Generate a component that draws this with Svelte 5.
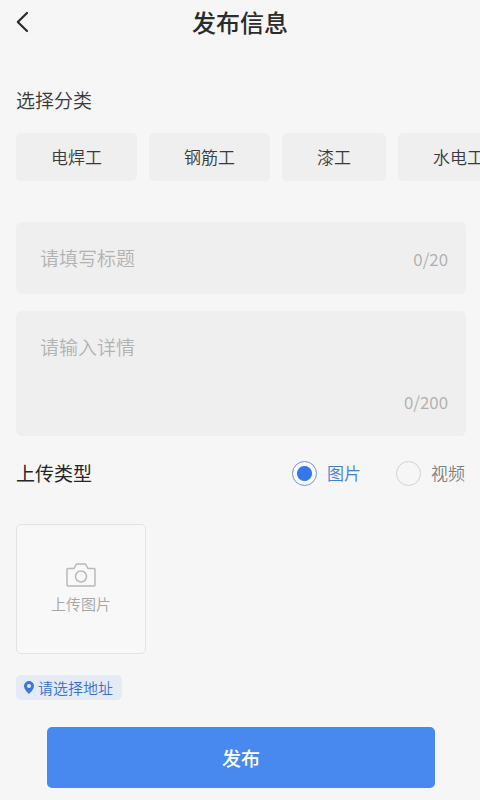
<script>
  const categories = ['电焊工', '钢筋工', '漆工', '水电工'];
  let category = $state('');
  let title = $state('');
  let detail = $state('');
  let kind = $state('image');
</script>

<div class="page">
  <header>
    <button class="back" type="button" aria-label="返回">
      <svg width="14" height="22" viewBox="0 0 14 22" fill="none" stroke="#2b2b2b" stroke-width="2.200" stroke-linecap="round" stroke-linejoin="round">
        <path d="M11 2 1.800 11l9.200 9" />
      </svg>
    </button>
    <h1>发布信息</h1>
  </header>

  <form onsubmit={(e) => e.preventDefault()}>
    <h2>选择分类</h2>
    <div class="chips">
      {#each categories as name}
        <button type="button" class="chip" aria-pressed={category === name} onclick={() => (category = name)}>{name}</button>
      {/each}
    </div>

    <div class="field single">
      <input type="text" maxlength="20" placeholder="请填写标题" aria-label="标题" bind:value={title} />
      <span class="count">{title.length}/20</span>
    </div>

    <div class="field multi">
      <textarea maxlength="200" placeholder="请输入详情" aria-label="详情" bind:value={detail}></textarea>
      <span class="count">{detail.length}/200</span>
    </div>

    <div class="kind">
      <h2 class="strong">上传类型</h2>
      <div class="options" role="radiogroup" aria-label="上传类型">
        <label class:on={kind === 'image'}>
          <input type="radio" name="kind" value="image" bind:group={kind} />图片
        </label>
        <label class:on={kind === 'video'}>
          <input type="radio" name="kind" value="video" bind:group={kind} />视频
        </label>
      </div>
    </div>

    <button type="button" class="upload">
      <svg width="30" height="24" viewBox="0 0 30 24" fill="none" stroke="#b8b8b8" stroke-width="1.500" stroke-linejoin="round">
        <path d="M2 5.500h6L10.500 1h9L22 5.500h6a1 1 0 0 1 1 1V22a1 1 0 0 1-1 1H2a1 1 0 0 1-1-1V6.500a1 1 0 0 1 1-1z" />
        <circle cx="15" cy="13.500" r="5.500" />
      </svg>
      <span>上传图片</span>
    </button>

    <button type="button" class="address">
      <svg width="10" height="13" viewBox="0 0 10 13">
        <path fill="#3d78d8" fill-rule="evenodd" d="M5 0a5 5 0 0 1 5 5c0 3-3 6-5 8C3 11 0 8 0 5a5 5 0 0 1 5-5zm0 3a2 2 0 1 0 0 4 2 2 0 0 0 0-4z" />
      </svg>
      <span>请选择地址</span>
    </button>

    <button type="submit" class="submit">发布</button>
  </form>
</div>

<style>
  :global(body) {
    margin: 0;
    background: #f6f6f6;
  }
  .page {
    box-sizing: border-box;
    min-height: 100vh;
    overflow-x: hidden;
    background: #f6f6f6;
    color: #3a3a3a;
    font-family: "Noto Sans CJK SC", "Noto Sans", sans-serif;
    font-weight: 350;
  }
  button,
  input,
  textarea {
    margin: 0;
    padding: 0;
    border: 0;
    background: none;
    color: inherit;
    font-family: inherit;
    font-weight: inherit;
    outline: none;
  }
  button {
    cursor: pointer;
  }
  svg {
    display: block;
    flex: none;
  }
  header {
    display: grid;
    grid-template-columns: 48px 1fr 48px;
    align-items: center;
    height: 44px;
  }
  .back {
    display: flex;
    align-items: center;
    height: 44px;
    padding-left: 16px;
  }
  h1 {
    margin: 0;
    text-align: center;
    font-size: 24px;
    line-height: 36px;
    font-weight: 500;
    color: #2b2b2b;
  }
  form {
    display: flex;
    flex-direction: column;
    align-items: stretch;
    padding: 42px 14px 12px 16px;
  }
  h2 {
    margin: 0;
    font-size: 19px;
    line-height: 28px;
    font-weight: 350;
    color: #3a3a3a;
  }
  .strong {
    font-weight: 400;
    color: #262626;
  }
  .chips {
    display: flex;
    gap: 12px;
    margin: 19px -14px 0 0;
    overflow-x: auto;
    scrollbar-width: none;
  }
  .chip {
    flex: none;
    height: 48px;
    padding: 0 35px;
    border-radius: 5px;
    background: #efefef;
    font-size: 17px;
    line-height: 24px;
  }
  .chip[aria-pressed='true'] {
    background: #e4edfb;
    color: #3d78d8;
  }
  .field {
    display: flex;
    box-sizing: border-box;
    border-radius: 6px;
    background: #efefef;
    padding: 22px 18px 22px 24px;
  }
  .single {
    align-items: baseline;
    height: 72px;
    margin-top: 41px;
  }
  .multi {
    align-items: flex-end;
    height: 125px;
    margin-top: 17px;
  }
  .field input,
  .field textarea {
    flex: 1;
    min-width: 0;
    font-size: 19px;
    line-height: 28px;
  }
  .field textarea {
    align-self: stretch;
    resize: none;
  }
  ::placeholder {
    color: #b2b2b2;
    opacity: 1;
  }
  .count {
    font-size: 17px;
    line-height: 24px;
    color: #aeaeae;
  }
  .kind {
    display: flex;
    flex-wrap: wrap;
    align-items: center;
    justify-content: space-between;
    margin-top: 23px;
    padding-right: 1px;
  }
  .options {
    display: flex;
    gap: 35px;
  }
  label {
    display: flex;
    align-items: center;
    gap: 10px;
    font-size: 17px;
    line-height: 28px;
    color: #808080;
  }
  label.on {
    color: #3d80dc;
  }
  label input {
    appearance: none;
    box-sizing: border-box;
    width: 25px;
    height: 25px;
    border: 1px solid #d2d2d2;
    border-radius: 50%;
  }
  label input:checked {
    border-color: #7594d0;
    background: radial-gradient(circle, #3478ee 7px, #f8faff 8px);
  }
  .upload {
    display: flex;
    flex-direction: column;
    align-items: center;
    justify-content: center;
    gap: 6px;
    box-sizing: border-box;
    width: 130px;
    height: 130px;
    margin-top: 37px;
    border: 1px solid #e3e3e3;
    border-radius: 5px;
    background: #f8f8f8;
    color: #a6a6a6;
    font-size: 15px;
    line-height: 22px;
  }
  .address {
    display: flex;
    align-items: center;
    align-self: flex-start;
    gap: 4px;
    height: 25px;
    margin-top: 21px;
    padding: 0 9px 0 8px;
    border-radius: 5px;
    background: #e5ebf5;
    color: #3572d4;
    font-size: 15px;
    line-height: 22px;
  }
  .submit {
    height: 61px;
    margin: 27px 31px 0;
    border-radius: 5px;
    background: #4789ee;
    color: #fff;
    font-size: 19px;
    line-height: 28px;
    font-weight: 500;
  }
</style>
